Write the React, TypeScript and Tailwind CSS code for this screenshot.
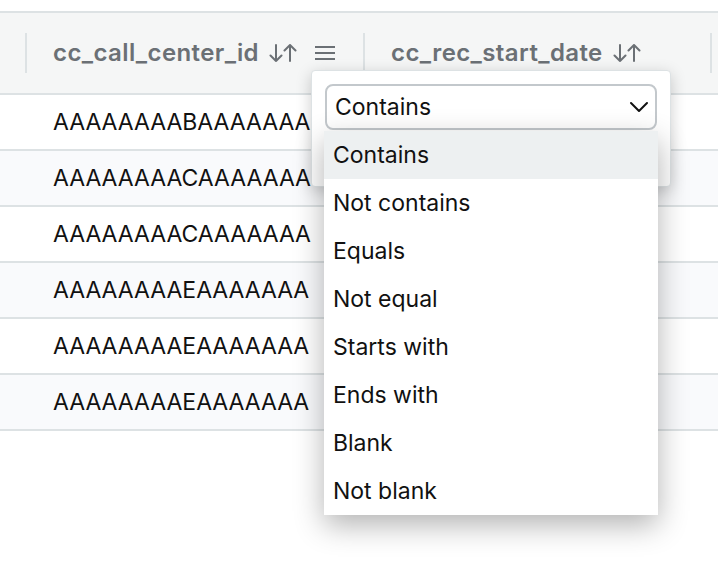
import React from "react";

const ROWS = [
  "AAAAAAAABAAAAAAA",
  "AAAAAAAACAAAAAAA",
  "AAAAAAAACAAAAAAA",
  "AAAAAAAAEAAAAAAA",
  "AAAAAAAAEAAAAAAA",
  "AAAAAAAAEAAAAAAA",
];

const OPTIONS = [
  "Contains",
  "Not contains",
  "Equals",
  "Not equal",
  "Starts with",
  "Ends with",
  "Blank",
  "Not blank",
];

const SortIcon = () => (
  <svg width="28" height="18" viewBox="0 0 28 18" fill="none" stroke="#6b7075" strokeWidth="2" strokeLinecap="round" strokeLinejoin="round">
    <path d="M7 1v16M1.5 11.5L7 17l5.5-5.5" />
    <path d="M21 17V1M15.5 6.5L21 1l5.5 5.5" />
  </svg>
);

const MenuIcon = () => (
  <svg width="20" height="16" viewBox="0 0 20 16" fill="none" stroke="#6b7075" strokeWidth="2">
    <path d="M0 2h20M0 8h20M0 14h20" />
  </svg>
);

const Chevron = () => (
  <svg width="20" height="12" viewBox="0 0 20 12" fill="none" stroke="#111" strokeWidth="2" strokeLinecap="round" strokeLinejoin="round">
    <path d="M2 2l8 8 8-8" />
  </svg>
);

const Divider = () => <div className="h-[40px] w-[2px] bg-[#dde2e4]" />;

export default function App() {
  return (
    <div className="relative h-[572px] w-[718px] overflow-hidden bg-white font-['Inter',sans-serif] text-[23px]">
      <div className="mt-[11px] border-t-2 border-[#dde2e4]">
        {/* header */}
        <div className="grid h-[82px] grid-cols-[27px_338px_347px_1fr] border-b-2 border-[#dde2e4] bg-[#f5f6f6] text-[24px] font-semibold tracking-[0.4px] text-[#6b7075]">
          <div className="flex items-center justify-end">
            <Divider />
          </div>
          <div className="flex items-center justify-between pl-[26px]">
            <div className="flex items-center gap-[10px]">
              <span>cc_call_center_id</span>
              <SortIcon />
            </div>
            <div className="flex items-center gap-[28px]">
              <MenuIcon />
              <Divider />
            </div>
          </div>
          <div className="flex items-center justify-between pl-[26px]">
            <div className="flex items-center gap-[10px]">
              <span>cc_rec_start_date</span>
              <SortIcon />
            </div>
            <Divider />
          </div>
          <div />
        </div>
        {/* rows */}
        {ROWS.map((r, i) => (
          <div
            key={i}
            className={`grid h-[56px] grid-cols-[27px_338px_1fr] border-b-2 border-[#dde2e4] ${i % 2 === 1 ? "bg-[#f9fafc]" : "bg-white"}`}
          >
            <div />
            <div className="flex items-center overflow-hidden whitespace-nowrap pl-[26px] text-[#111]">{r}</div>
            <div />
          </div>
        ))}
      </div>

      {/* filter popup */}
      <div className="absolute left-[311px] top-[70px] h-[117px] w-[360px] rounded-[4px] border border-[#dde2e4] bg-white p-[13px] shadow-[0_4px_16px_rgba(0,0,0,0.2)]">
        <div className="flex h-[46px] items-center justify-between rounded-[8px] border-2 border-[#c3c8cc] bg-white pl-[8px] pr-[6px] text-[#111]">
          <span>Contains</span>
          <Chevron />
        </div>
      </div>

      {/* options list */}
      <div className="absolute left-[324px] top-[131px] w-[334px] bg-white text-[#111] shadow-[0_10px_28px_rgba(0,0,0,0.3)]">
        {OPTIONS.map((o, i) => (
          <div key={o} className={`flex h-[48px] items-center pl-[9px] ${i === 0 ? "bg-[#edf0f1]" : ""}`}>
            {o}
          </div>
        ))}
      </div>
    </div>
  );
}
